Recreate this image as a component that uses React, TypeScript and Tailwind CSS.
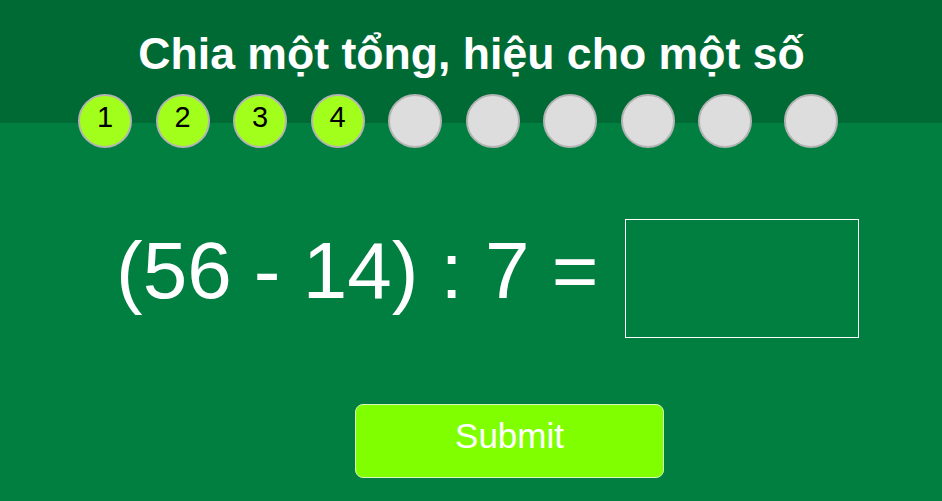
export default function App() {
  const steps = [1, 2, 3, 4, 0, 0, 0, 0, 0, 0];

  return (
    <div
      className="w-[942px] h-[501px] overflow-hidden bg-[linear-gradient(#006a35_123px,#007f40_123px)]"
      style={{ fontFamily: '"Liberation Sans", Arial, sans-serif' }}
    >
      <h1 className="pt-[32px] pl-[1px] text-center text-[44.6px] leading-[44px] font-bold text-white">
        Chia một tổng, hiệu cho một số
      </h1>

      <div className="flex pl-[78px] mt-[18px]">
        {steps.map((n, i) => (
          <div
            key={i}
            className={
              (i === 9 ? "ml-[32px] " : i > 0 ? "ml-[23.5px] " : "") +
              (n ? "bg-[#a2ff1c] " : "bg-[#dddddd] ") +
              "w-[54px] h-[54px] shrink-0 rounded-full border-2 border-[#b4b4b4] flex items-center justify-center pb-[6px] text-[29px] text-black"
            }
          >
            {n ? n : ""}
          </div>
        ))}
      </div>

      <div className="flex items-center pl-[116px] mt-[71px]">
        <span className="text-[80px] leading-none text-white pb-[16px]">(56 - 14) : 7 =</span>
        <div className="ml-[27px] w-[234px] h-[119px] border border-white" />
      </div>

      <div className="flex pl-[355px] mt-[66px]">
        <button className="w-[309px] h-[74px] rounded-[8px] border border-[#d8f5c0] bg-[#80ff00] text-white text-[35px] pb-[10px] flex items-center justify-center">
          Submit
        </button>
      </div>
    </div>
  );
}
